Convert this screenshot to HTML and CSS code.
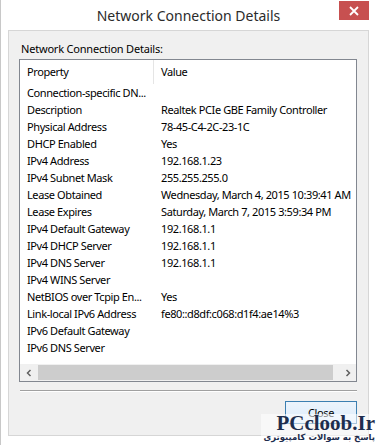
FILE: index.html
```html
<!DOCTYPE html>
<html>
<head>
<meta charset="utf-8">
<link rel="stylesheet" href="styles.css">
</head>
<body>
<div class="window">
  <div class="titlebar">
    <div class="title">Network Connection Details</div>
    <div class="close-x"><svg width="12" height="10" viewBox="0 0 12 10"><path d="M2 1 L10 9 M10 1 L2 9" stroke="#fff" stroke-width="1.8"/></svg></div>
  </div>
  <div class="client">
    <div class="label">Network Connection Details:</div>
    <div class="listbox">
      <div class="header">
        <div class="hcell prop">Property</div>
        <div class="hcell val">Value</div>
      </div>
      <div class="rows">
        <div class="row"><div class="c1">Connection-specific DN...</div><div class="c2"></div></div>
        <div class="row"><div class="c1">Description</div><div class="c2">Realtek PCIe GBE Family Controller</div></div>
        <div class="row"><div class="c1">Physical Address</div><div class="c2">78-45-C4-2C-23-1C</div></div>
        <div class="row"><div class="c1">DHCP Enabled</div><div class="c2">Yes</div></div>
        <div class="row"><div class="c1">IPv4 Address</div><div class="c2">192.168.1.23</div></div>
        <div class="row"><div class="c1">IPv4 Subnet Mask</div><div class="c2">255.255.255.0</div></div>
        <div class="row"><div class="c1">Lease Obtained</div><div class="c2">Wednesday, March 4, 2015 10:39:41 AM</div></div>
        <div class="row"><div class="c1">Lease Expires</div><div class="c2">Saturday, March 7, 2015 3:59:34 PM</div></div>
        <div class="row"><div class="c1">IPv4 Default Gateway</div><div class="c2">192.168.1.1</div></div>
        <div class="row"><div class="c1">IPv4 DHCP Server</div><div class="c2">192.168.1.1</div></div>
        <div class="row"><div class="c1">IPv4 DNS Server</div><div class="c2">192.168.1.1</div></div>
        <div class="row"><div class="c1">IPv4 WINS Server</div><div class="c2"></div></div>
        <div class="row"><div class="c1">NetBIOS over Tcpip En...</div><div class="c2">Yes</div></div>
        <div class="row"><div class="c1">Link-local IPv6 Address</div><div class="c2">fe80::d8df:c068:d1f4:ae14%3</div></div>
        <div class="row"><div class="c1">IPv6 Default Gateway</div><div class="c2"></div></div>
        <div class="row"><div class="c1">IPv6 DNS Server</div><div class="c2"></div></div>
      </div>
      <div class="hscroll">
        <div class="arrow"><svg width="8" height="8" viewBox="0 0 8 8"><path d="M5.5 1 L2.5 4 L5.5 7" fill="none" stroke="#606060" stroke-width="1.5"/></svg></div>
        <div class="track"><div class="thumb"></div></div>
        <div class="arrow"><svg width="8" height="8" viewBox="0 0 8 8"><path d="M2.5 1 L5.5 4 L2.5 7" fill="none" stroke="#606060" stroke-width="1.5"/></svg></div>
      </div>
    </div>
    <div class="separator"></div>
    <div class="buttons">
      <div class="btn">Close</div>
    </div>
  </div>
  <div class="watermark">
    <div class="wm-main">PCcloob.Ir</div>
    <div class="wm-sub">پاسخ به سوالات کامپیوتری</div>
  </div>
</div>
</body>
</html>
```

FILE: styles.css
```css
html, body {
  margin: 0;
  padding: 0;
  background: #ffffff;
}
.window {
  position: relative;
  width: 376px;
  height: 445px;
  box-sizing: border-box;
  border-left: 1px solid #c8c8c8;
  background: #ffffff;
  padding: 0 7px 0 7px;
  font-family: "Noto Sans", sans-serif;
  font-size: 11px;
  letter-spacing: -0.4px;
  color: #000;
}
.titlebar {
  position: relative;
  height: 30px;
  display: flex;
  align-items: center;
  justify-content: center;
}
.title {
  font-family: "Noto Sans", sans-serif;
  font-size: 14px;
  letter-spacing: 0;
  color: #2b2b2b;
  margin-top: 1px;
}
.close-x {
  position: absolute;
  right: 0;
  top: 1px;
  width: 30px;
  height: 19px;
  background: #c75050;
  display: flex;
  align-items: center;
  justify-content: center;
}
.client {
  background: #f0f0f0;
  border: 1px solid #d6d6d6;
  height: 406px;
  box-sizing: border-box;
  padding: 0 10px 0 10px;
  display: flex;
  flex-direction: column;
}
.label {
  margin-top: 10px;
  height: 18px;
  line-height: 15px;
  padding-left: 2px;
  letter-spacing: -0.2px;
}
.listbox {
  width: 338px;
  height: 323px;
  box-sizing: border-box;
  border: 1px solid #828790;
  background: #ffffff;
  display: flex;
  flex-direction: column;
  overflow: hidden;
}
.header {
  display: flex;
  height: 24px;
  flex: none;
}
.hcell {
  line-height: 24px;
  box-sizing: border-box;
}
.hcell.prop {
  width: 134px;
  padding-left: 7px;
  border-right: 1px solid #e5e5e5;
}
.hcell.val {
  padding-left: 7px;
}
.rows {
  flex: 1;
  display: flex;
  flex-direction: column;
}
.row {
  display: flex;
  height: 17px;
  line-height: 17px;
  white-space: nowrap;
  flex: none;
}
.c1 {
  flex: none;
  width: 134px;
  padding-left: 7px;
  box-sizing: border-box;
  overflow: hidden;
}
.c2 {
  flex: 1;
  min-width: 0;
  overflow: hidden;
  padding-left: 7px;
}
.hscroll {
  height: 17px;
  flex: none;
  display: flex;
  background: #f0f0f0;
}
.arrow {
  width: 17px;
  height: 17px;
  display: flex;
  align-items: center;
  justify-content: center;
  flex: none;
}
.track {
  flex: 1;
  padding: 1px 6px 1px 1px;
}
.thumb {
  height: 15px;
  background: #cdcdcd;
}
.separator {
  margin-top: 8px;
  width: 337px;
  margin-left: 1px;
  height: 0;
  border-top: 1px solid #a0a0a0;
  border-bottom: 1px solid #ffffff;
}
.buttons {
  display: flex;
  justify-content: flex-end;
  margin-top: 9px;
  width: 338px;
}
.btn {
  width: 72px;
  height: 23px;
  box-sizing: border-box;
  border: 1px solid #3c7fb1;
  background: linear-gradient(#ecf4fc, #dcecfc);
  text-align: center;
  line-height: 21px;
  color: #000;
}
.watermark {
  position: absolute;
  right: 0;
  bottom: 3px;
  text-align: right;
  background: rgba(255,255,255,0.55);
  padding: 0 1px 0 2px;
  letter-spacing: 0;
}
.wm-main {
  font-family: "Liberation Serif", serif;
  font-weight: bold;
  font-size: 21px;
  line-height: 18px;
  color: #1e2d4d;
}
.wm-sub {
  font-family: "DejaVu Sans", "Noto Sans", sans-serif;
  font-weight: bold;
  font-size: 8.5px;
  line-height: 10px;
  color: #1e2d4d;
  direction: rtl;
}
```
